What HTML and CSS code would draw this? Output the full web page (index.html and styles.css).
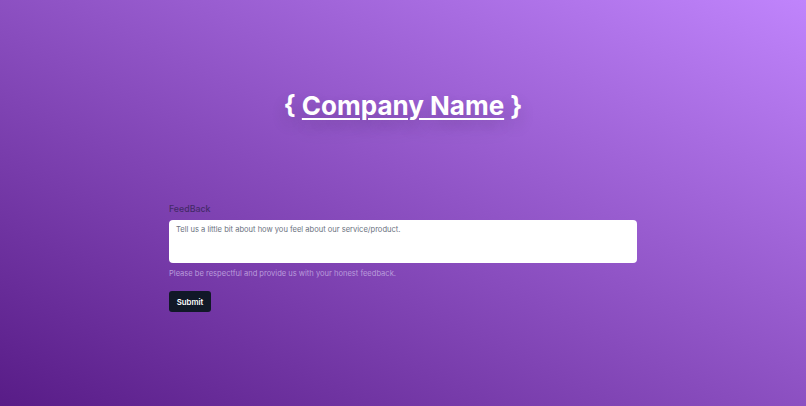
FILE: index.html
```html
<!DOCTYPE html>
<html>
<head>
<meta charset="utf-8">
<link rel="stylesheet" href="styles.css">
</head>
<body>
<div class="page">
  <header class="hero">
    <h1 class="title">{ <a href="#" class="brand">Company Name</a> }</h1>
  </header>
  <form class="form">
    <label class="label" for="fb">FeedBack</label>
    <textarea id="fb" class="input" placeholder="Tell us a little bit about how you feel about our service/product."></textarea>
    <p class="help">Please be respectful and provide us with your honest feedback.</p>
    <button type="button" class="btn">Submit</button>
  </form>
</div>
</body>
</html>
```
FILE: styles.css
```css
html, body {
  margin: 0;
  padding: 0;
  height: 100%;
}
body {
  font-family: Inter, "Noto Sans", sans-serif;
  background: linear-gradient(to top right, #581c87, #c084fc);
  overflow: hidden;
}
.page {
  height: 100%;
  display: flex;
  flex-direction: column;
  align-items: center;
}
.hero {
  padding-top: 89px;
  height: 110px;
  box-sizing: border-box;
}
.title {
  margin: 0;
  color: #fff;
  font-size: 26px;
  font-weight: 700;
  line-height: 34px;
  text-shadow: 0 8px 16px rgba(0, 0, 0, 0.2);
}
.brand {
  color: #fff;
  text-decoration: underline;
  text-decoration-thickness: 2px;
  text-underline-offset: 3px;
}
.form {
  width: 468px;
  margin-top: 92px;
  display: flex;
  flex-direction: column;
  align-items: flex-start;
}
.label {
  font-size: 8.8px;
  font-weight: 500;
  color: #442a68;
  line-height: 14px;
  margin-bottom: 4px;
}
.input {
  width: 100%;
  box-sizing: border-box;
  height: 43px;
  border: none;
  border-radius: 4px;
  background: #fff;
  padding: 5px 7px;
  font-family: Inter, "Noto Sans", sans-serif;
  font-size: 7.56px;
  resize: none;
  margin: 0;
  display: block;
}
.input::placeholder {
  color: #6b7280;
}
.help {
  margin: 5px 0 0;
  font-size: 7.56px;
  line-height: 12px;
  color: #b99bdb;
}
.btn {
  margin-top: 11px;
  width: 42px;
  height: 21px;
  border: none;
  border-radius: 3px;
  background: #111827;
  color: #fff;
  font-family: Inter, "Noto Sans", sans-serif;
  font-size: 7.8px;
  font-weight: 600;
  padding: 0;
}
```
